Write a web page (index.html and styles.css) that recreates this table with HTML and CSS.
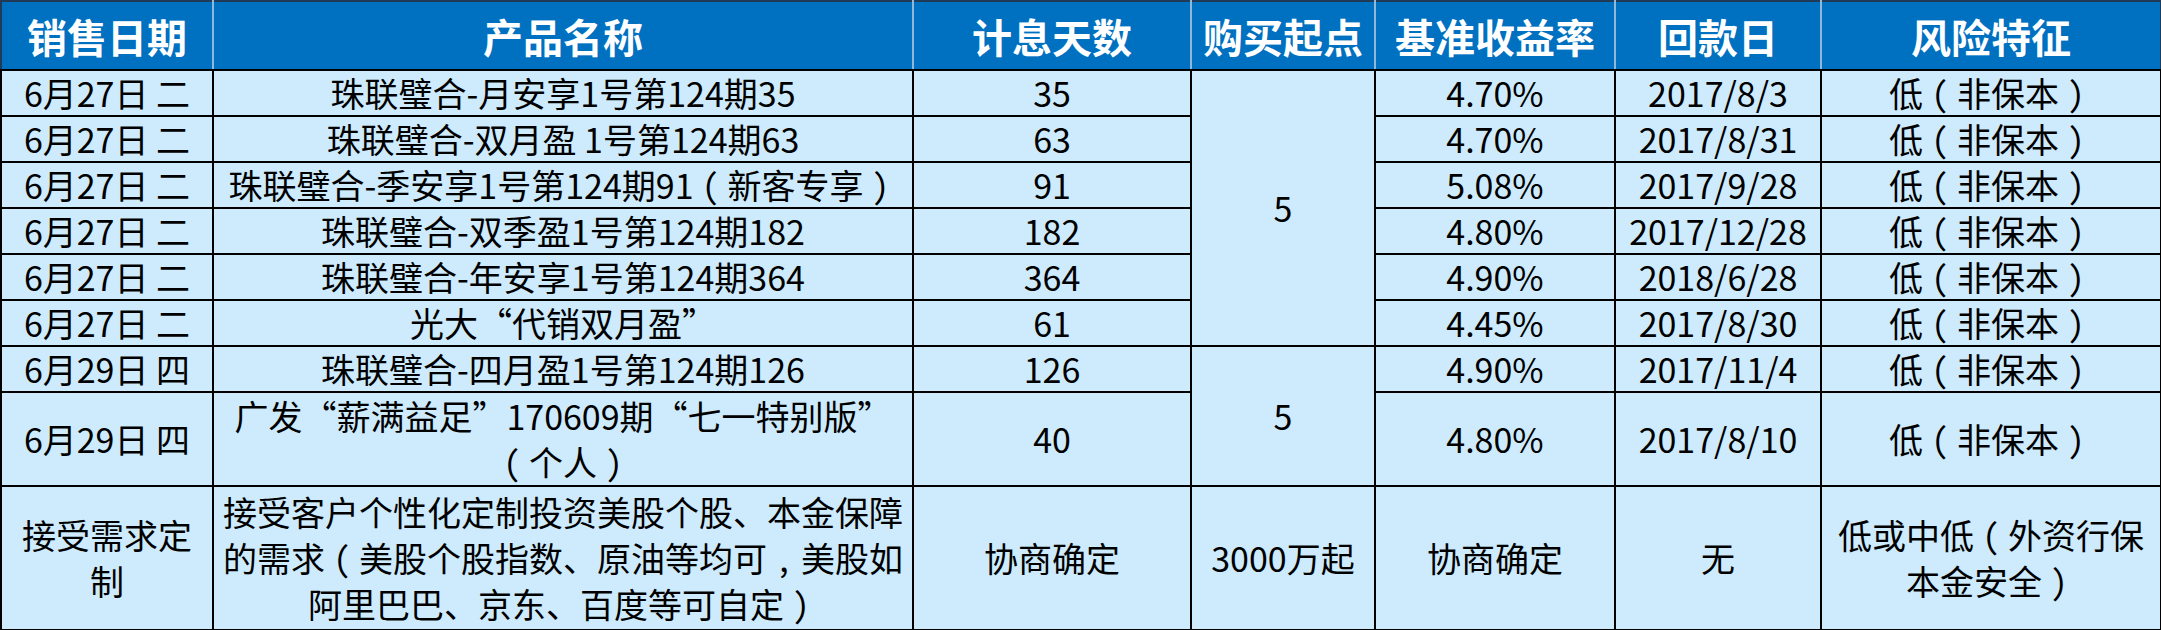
FILE: index.html
```html
<!DOCTYPE html>
<html lang="zh-CN">
<head>
<meta charset="utf-8">
<title>理财产品</title>
<link rel="stylesheet" href="styles.css">
</head>
<body>
<table class="sheet">
  <colgroup>
    <col class="c-date">
    <col class="c-name">
    <col class="c-days">
    <col class="c-min">
    <col class="c-rate">
    <col class="c-pay">
    <col class="c-risk">
  </colgroup>
  <thead>
    <tr class="head">
      <th>销售日期</th>
      <th>产品名称</th>
      <th>计息天数</th>
      <th>购买起点</th>
      <th>基准收益率</th>
      <th>回款日</th>
      <th>风险特征</th>
    </tr>
  </thead>
  <tbody>
    <tr class="r1">
      <td>6月27日 二</td>
      <td>珠联璧合-月安享1号第124期35</td>
      <td>35</td>
      <td rowspan="6">5</td>
      <td>4.70%</td>
      <td>2017/8/3</td>
      <td>低<span class="p">（</span>非保本<span class="p">）</span></td>
    </tr>
    <tr class="r1">
      <td>6月27日 二</td>
      <td>珠联璧合-双月盈 1号第124期63</td>
      <td>63</td>
      <td>4.70%</td>
      <td>2017/8/31</td>
      <td>低<span class="p">（</span>非保本<span class="p">）</span></td>
    </tr>
    <tr class="r1">
      <td>6月27日 二</td>
      <td>珠联璧合-季安享1号第124期91<span class="p">（</span>新客专享<span class="p">）</span></td>
      <td>91</td>
      <td>5.08%</td>
      <td>2017/9/28</td>
      <td>低<span class="p">（</span>非保本<span class="p">）</span></td>
    </tr>
    <tr class="r1">
      <td>6月27日 二</td>
      <td>珠联璧合-双季盈1号第124期182</td>
      <td>182</td>
      <td>4.80%</td>
      <td>2017/12/28</td>
      <td>低<span class="p">（</span>非保本<span class="p">）</span></td>
    </tr>
    <tr class="r1">
      <td>6月27日 二</td>
      <td>珠联璧合-年安享1号第124期364</td>
      <td>364</td>
      <td>4.90%</td>
      <td>2018/6/28</td>
      <td>低<span class="p">（</span>非保本<span class="p">）</span></td>
    </tr>
    <tr class="r1">
      <td>6月27日 二</td>
      <td>光大“代销双月盈”</td>
      <td>61</td>
      <td>4.45%</td>
      <td>2017/8/30</td>
      <td>低<span class="p">（</span>非保本<span class="p">）</span></td>
    </tr>
    <tr class="r1">
      <td>6月29日 四</td>
      <td>珠联璧合-四月盈1号第124期126</td>
      <td>126</td>
      <td rowspan="2">5</td>
      <td>4.90%</td>
      <td>2017/11/4</td>
      <td>低<span class="p">（</span>非保本<span class="p">）</span></td>
    </tr>
    <tr class="r2">
      <td>6月29日 四</td>
      <td>广发“薪满益足”170609期“七一特别版”<br><span class="p">（</span>个人<span class="p">）</span></td>
      <td>40</td>
      <td>4.80%</td>
      <td>2017/8/10</td>
      <td>低<span class="p">（</span>非保本<span class="p">）</span></td>
    </tr>
    <tr class="r3">
      <td>接受需求定<br>制</td>
      <td>接受客户个性化定制投资美股个股、本金保障<br>的需求<span class="p">（</span>美股个股指数、原油等均可<span class="p">，</span>美股如<br>阿里巴巴、京东、百度等可自定<span class="p">）</span></td>
      <td>协商确定</td>
      <td>3000万起</td>
      <td>协商确定</td>
      <td>无</td>
      <td>低或中低<span class="p">（</span>外资行保<br>本金安全<span class="p">）</span></td>
    </tr>
  </tbody>
</table>
</body>
</html>
```

FILE: styles.css
```css
html, body {
  margin: 0;
  padding: 0;
  background: #ffffff;
}

.sheet {
  border-collapse: collapse;
  table-layout: fixed;
  width: 2160px;
  font-family: "Noto Sans CJK SC", "Microsoft YaHei", sans-serif;
  color: #000000;
}

.c-date { width: 212px; }
.c-name { width: 700px; }
.c-days { width: 278px; }
.c-min  { width: 184px; }
.c-rate { width: 240px; }
.c-pay  { width: 206px; }
.c-risk { width: 340px; }

.head {
  height: 69px;
}

.head th {
  background: #0070c0;
  color: #ffffff;
  font-size: 40px;
  font-weight: 700;
  line-height: 66px;
  padding: 0;
  text-align: center;
  vertical-align: middle;
  border-top: 2px solid #1f3b57;
  border-left: 2px solid #8fb8dc;
  border-right: 2px solid #8fb8dc;
  border-bottom: 2px solid #000000;
  white-space: nowrap;
}

.head th:first-child {
  border-left: 2px solid #1f3b57;
}

.head th:last-child {
  border-right: 2px solid #1f3b57;
}

.sheet td {
  background: #cdebfd;
  border: 2px solid #000000;
  padding: 0;
  text-align: center;
  vertical-align: middle;
  font-size: 34px;
  line-height: 44px;
  white-space: nowrap;
}

/* centred full-width punctuation, as in the original sheet's font:
   half-width glyph padded back out to a full em */
.p {
  font-feature-settings: "hwid" 1;
  padding: 0 0.25em;
}

.r1 { height: 46px; }
.r2 { height: 92px; }
.r3 { height: 144px; }

.r2 td { line-height: 46px; }
.r3 td { line-height: 46px; }
```
